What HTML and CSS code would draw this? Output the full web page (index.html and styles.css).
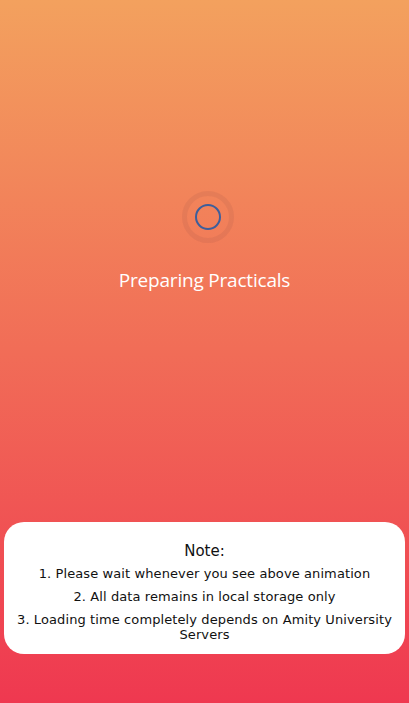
FILE: index.html
```html
<!DOCTYPE html>
<html>
<head>
<meta charset="utf-8">
<link rel="stylesheet" href="styles.css">
</head>
<body>
<div class="screen">
  <div class="loader">
    <div class="spinner"><div class="ring"></div></div>
    <div class="title">Preparing Practicals</div>
  </div>
  <div class="note">
    <div class="note-title">Note:</div>
    <div class="note-line">1. Please wait whenever you see above animation</div>
    <div class="note-line">2. All data remains in local storage only</div>
    <div class="note-line">3. Loading time completely depends on Amity University Servers</div>
  </div>
</div>
</body>
</html>
```
FILE: styles.css
```css
html, body { margin: 0; padding: 0; }
body { width: 409px; height: 703px; overflow: hidden; }
.screen {
  height: 703px;
  box-sizing: border-box;
  background: linear-gradient(to bottom, #f3a15e 0%, #ef3850 100%);
  display: flex;
  flex-direction: column;
  align-items: center;
  padding: 0 4px;
}
.loader {
  margin-top: 191px;
  display: flex;
  flex-direction: column;
  align-items: center;
}
.spinner {
  width: 52px; height: 52px;
  margin-left: 8px;
  border-radius: 50%;
  border: 5px solid rgba(150, 80, 70, 0.13);
  box-sizing: border-box;
  display: flex; align-items: center; justify-content: center;
}
.ring {
  width: 26px; height: 26px;
  border-radius: 50%;
  border: 2px solid #3d5e9b;
  box-sizing: border-box;
}
.title {
  margin-top: 24px;
  color: #fff;
  font-family: "Open Sans", sans-serif;
  font-size: 19px;
  letter-spacing: -0.2px;
}
.note {
  margin-top: auto;
  margin-bottom: 49px;
  align-self: stretch;
  background: #fff;
  border-radius: 20px;
  padding: 20px 6px 12px;
  text-align: center;
  font-family: "DejaVu Sans", sans-serif;
  color: #111;
}
.note-title { font-size: 15px; margin-bottom: 6px; }
.note-line { font-size: 13px; line-height: 15px; margin-bottom: 8px; letter-spacing: 0.1px; }
.note-line:last-child { margin-bottom: 0; }
```
